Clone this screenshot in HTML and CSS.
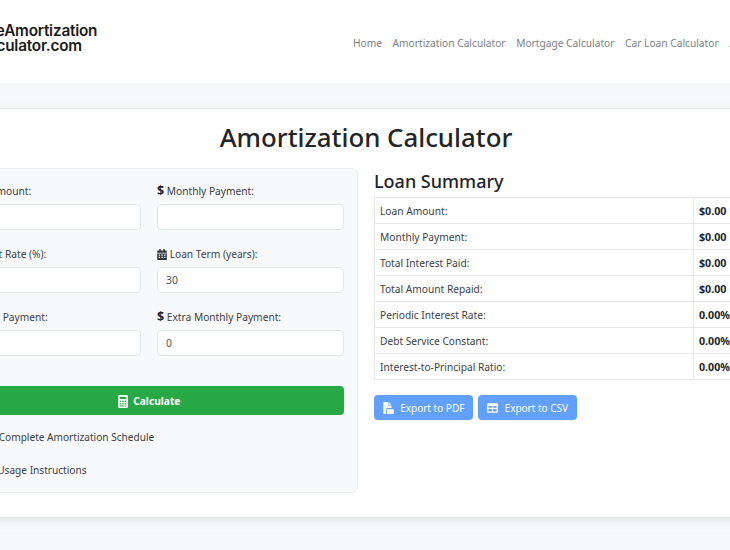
FILE: index.html
```html
<!DOCTYPE html>
<html>
<head>
    <meta charset='utf-8'>
    <title>Amortization Calculator</title>
    <meta name='viewport' content='width=device-width, initial-scale=1'>
    <link rel="stylesheet" href="styles.css">
</head>
<body>
    <div class="page">
        <header class="topbar">
            <a class="logo" href="#">FreeAmortization<br>Calculator.com</a>
            <nav class="menu">
                <a href="#">Home</a>
                <a href="#">Amortization Calculator</a>
                <a href="#">Mortgage Calculator</a>
                <a href="#">Car Loan Calculator</a>
                <a href="#">Auto Loan</a>
            </nav>
        </header>
        <main class="card">
            <h1 class="title">Amortization Calculator</h1>
            <div class="columns">
                <section class="panel">
                    <div class="fields">
                        <div class="field">
                            <label for="amount"><span class="dollar">$</span> Loan Amount:</label>
                            <input id="amount" type="text">
                        </div>
                        <div class="field">
                            <label for="monthly"><span class="dollar">$</span> Monthly Payment:</label>
                            <input id="monthly" type="text">
                        </div>
                        <div class="field">
                            <label for="rate"><span class="percent">%</span> Interest Rate (%):</label>
                            <input id="rate" type="text">
                        </div>
                        <div class="field">
                            <label for="term">
                                <svg class="icon cal" viewBox="0 0 14 16"><path fill="currentColor" d="M3 0h2v2h4V0h2v2h2a1 1 0 0 1 1 1v2.500H0V3a1 1 0 0 1 1-1h2zM0 6.500h14V15a1 1 0 0 1-1 1H1a1 1 0 0 1-1-1zM2 8v1.800h2.200V8zm3.900 0v1.800h2.200V8zm3.900 0v1.800H12V8zM2 11.200V13h2.200v-1.800zm3.900 0V13h2.200v-1.800zm3.900 0V13H12v-1.800z"/></svg>
                                Loan Term (years):
                            </label>
                            <input id="term" type="text" value="30">
                        </div>
                        <div class="field">
                            <label for="balloon"><span class="dollar">$</span> Balloon Payment:</label>
                            <input id="balloon" type="text">
                        </div>
                        <div class="field">
                            <label for="extra"><span class="dollar">$</span> Extra Monthly Payment:</label>
                            <input id="extra" type="text" value="0">
                        </div>
                    </div>
                    <button class="calc">
                        <svg class="icon calc-icon" viewBox="0 0 12 16"><path fill="currentColor" d="M1.500 0h9A1.500 1.500 0 0 1 12 1.500v13a1.500 1.500 0 0 1-1.500 1.500h-9A1.500 1.500 0 0 1 0 14.500v-13A1.500 1.500 0 0 1 1.500 0zM2 2v3h8V2zm0 5v1.600h2V7zm3 0v1.600h2V7zm3 0v1.600h2V7zM2 10v1.600h2V10zm3 0v1.600h2V10zm3 0v1.600h2V10zM2 13v1.300h5V13zm6 0v1.300h2V13z"/></svg>
                        Calculate
                    </button>
                    <div class="toggle schedule">View Complete Amortization Schedule</div>
                    <div class="toggle usage">Show Usage Instructions</div>
                </section>
                <section class="summary">
                    <h2>Loan Summary</h2>
                    <table>
                        <tr><td>Loan Amount:</td><th>$0.00</th></tr>
                        <tr><td>Monthly Payment:</td><th>$0.00</th></tr>
                        <tr><td>Total Interest Paid:</td><th>$0.00</th></tr>
                        <tr><td>Total Amount Repaid:</td><th>$0.00</th></tr>
                        <tr><td>Periodic Interest Rate:</td><th>0.00%</th></tr>
                        <tr><td>Debt Service Constant:</td><th>0.00%</th></tr>
                        <tr><td>Interest-to-Principal Ratio:</td><th>0.00%</th></tr>
                    </table>
                    <div class="exports">
                        <button class="export" disabled>
                            <svg class="icon" viewBox="0 0 14 16"><path fill="currentColor" d="M1.500 0H7v4.500A1 1 0 0 0 8 5.500h3V8H5.500A1.500 1.500 0 0 0 4 9.500V16H1.500A1.500 1.500 0 0 1 0 14.500v-13A1.500 1.500 0 0 1 1.500 0zM8 0l3 4.500H8zM5 9.500h9V16H5z"/></svg>
                            Export to PDF
                        </button>
                        <button class="export" disabled>
                            <svg class="icon" viewBox="0 0 16 14"><path fill="currentColor" fill-rule="evenodd" d="M2 0h12a2 2 0 0 1 2 2v10a2 2 0 0 1-2 2H2a2 2 0 0 1-2-2V2a2 2 0 0 1 2-2zm0 4v2.800h5.200V4zm6.800 0v2.800H14V4zM2 8.300V12h5.200V8.300zm6.800 0V12H14V8.300z"/></svg>
                            Export to CSV
                        </button>
                    </div>
                </section>
            </div>
        </main>
    </div>
</body>
</html>
```

FILE: styles.css
```css
html, body {
    margin: 0;
    height: 550px;
    overflow: hidden;
}
body {
    background-color: #f8f9fa;
    color: #212529;
    font-family: "Noto Sans", "Open Sans", sans-serif;
}
.page {
    margin: 0 -80px;
}
.topbar {
    display: flex;
    align-items: center;
    height: 83px;
    padding-left: 53px;
    background-color: white;
}
.logo {
    width: 380px;
    margin-top: -7px;
    color: #1a1a1a;
    font-family: Inter, sans-serif;
    font-size: 15.3px;
    font-weight: 600;
    line-height: 15.5px;
    letter-spacing: -0.2px;
    text-decoration: none;
}
.menu {
    display: flex;
    gap: 10.6px;
    white-space: nowrap;
    margin-top: 2px;
}
.menu a {
    color: #7b8187;
    font-size: 10.2px;
    text-decoration: none;
}
.card {
    height: 409px;
    box-sizing: border-box;
    margin-top: 25px;
    padding-top: 11px;
    background-color: white;
    border-top: 1px solid #e6e8ea;
    box-shadow: 0 3px 10px rgba(0, 0, 0, 0.1);
}
.title {
    margin: 0 0 13px;
    height: 35px;
    line-height: 35px;
    text-align: center;
    font-size: 25.8px;
    font-weight: 500;
    padding-left: 2px;
}
.columns {
    display: flex;
    gap: 16px;
    padding: 0 18px 0 20px;
}
.panel {
    box-sizing: border-box;
    width: 418px;
    height: 325px;
    padding: 14px 13px 0;
    background-color: #f8f9fa;
    border: 1px solid #eceef0;
    border-radius: 6px;
}
.fields {
    display: grid;
    grid-template-columns: 1fr 187px;
    column-gap: 16px;
    row-gap: 16px;
}
.field label {
    display: block;
    height: 16px;
    margin-bottom: 5px;
    color: #3c4247;
    font-size: 10.2px;
    line-height: 16px;
    white-space: nowrap;
}
.field input {
    display: block;
    box-sizing: border-box;
    width: 100%;
    height: 26px;
    padding: 0 8px;
    background-color: white;
    border: 1px solid #e4e7ea;
    border-radius: 4px;
    color: #4f555a;
    font-family: inherit;
    font-size: 10.4px;
}
.dollar {
    color: #212529;
    font-size: 12.5px;
    font-weight: 700;
}
.percent {
    color: #212529;
    font-size: 9px;
    font-weight: 700;
}
.icon {
    width: 10px;
    height: 11px;
    vertical-align: -1.5px;
}
.cal {
    color: #2d3338;
}
.calc {
    display: block;
    width: 100%;
    height: 29px;
    margin-top: 30px;
    background-color: #28a745;
    border: none;
    border-radius: 4px;
    color: white;
    font-family: inherit;
    font-size: 10.2px;
    font-weight: 700;
}
.calc-icon {
    width: 10px;
    height: 13px;
    vertical-align: -3px;
    margin-right: 3px;
}
.toggle {
    height: 20px;
    color: #3c4247;
    font-size: 10.1px;
    line-height: 16px;
    white-space: nowrap;
}
.schedule {
    margin: 14px 0 0 20px;
}
.usage {
    margin: 13px 0 0 15px;
}
.summary {
    width: 418px;
}
.summary h2 {
    margin: 0;
    height: 29px;
    line-height: 26px;
    font-size: 18px;
    font-weight: 500;
}
.summary table {
    width: 100%;
    border-collapse: collapse;
}
.summary td, .summary th {
    height: 26px;
    box-sizing: border-box;
    padding: 0 5px;
    border: 1px solid #e6e8ea;
    color: #3c4247;
    font-size: 10.2px;
    font-weight: 400;
    text-align: left;
}
.summary th {
    width: 98px;
    color: #212529;
    font-size: 10.7px;
    font-weight: 700;
}
.exports {
    display: flex;
    gap: 5px;
    margin-top: 15px;
}
.export {
    width: 99px;
    height: 25px;
    padding: 0;
    background-color: #0d6efd;
    border: none;
    border-radius: 4px;
    color: white;
    opacity: 0.65;
    font-family: inherit;
    font-size: 10px;
    white-space: nowrap;
}
.export .icon {
    width: 11px;
    height: 12px;
    vertical-align: -2.5px;
    margin-right: 4px;
}
```
